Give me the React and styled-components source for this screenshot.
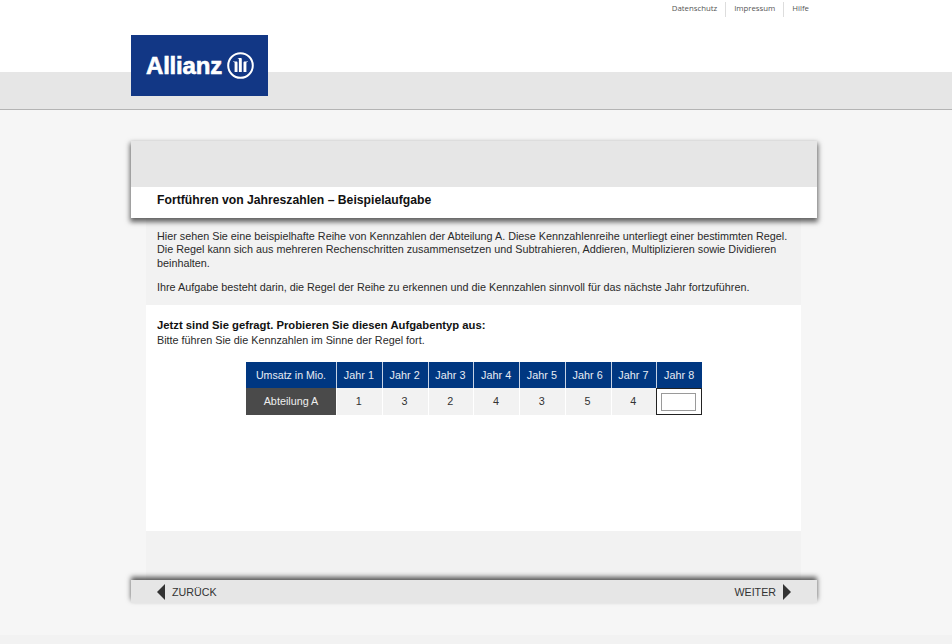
import React from "react";
import styled, { createGlobalStyle } from "styled-components";

const GlobalStyle = createGlobalStyle`
  html, body {
    margin: 0;
    padding: 0;
    background: #f6f6f6;
    font-family: "Liberation Sans", Arial, sans-serif;
    color: #1c1c1c;
  }
  * { box-sizing: border-box; }
`;

const Page = styled.div`
  width: 952px;
  height: 644px;
  overflow: hidden;
  position: relative;
  display: flex;
  flex-direction: column;
`;

const TopArea = styled.div`
  height: 72px;
  background: #fff;
  display: flex;
  justify-content: flex-end;
  padding: 2px 135px 0 0;
`;

const MetaLink = styled.a`
  height: 15px;
  line-height: 13px;
  padding: 0 8px;
  font-family: "Open Sans", sans-serif;
  font-size: 7.8px;
  color: #555;
  border-left: ${(p) => (p.$first ? "none" : "1px solid #ddd")};
`;

const GreyBand = styled.div`
  height: 38px;
  background: #e6e6e6;
  border-bottom: 1px solid #b4b4b4;
`;

const Logo = styled.div`
  position: absolute;
  left: 131px;
  top: 35px;
  width: 137px;
  height: 61px;
  background: #123785;
  color: #fff;
  display: flex;
  align-items: center;
  gap: 5px;
  padding-left: 15px;
  font-size: 24px;
  font-weight: 700;
  letter-spacing: -0.2px;
  -webkit-text-stroke: 0.6px #fff;
`;

const Main = styled.main`
  width: 686px;
  margin: 31px 0 0 131px;
  display: flex;
  flex-direction: column;
`;

const TitleCard = styled.header`
  height: 77px;
  position: relative;
  z-index: 1;
  display: flex;
  flex-direction: column;
  box-shadow: 0 3px 5px 1px rgba(0, 0, 0, 0.6);
`;

const TitleGrey = styled.div`
  height: 46px;
  background: #e6e6e6;
`;

const TitleWhite = styled.div`
  flex: 1;
  background: #fff;
  padding: 6px 0 0 26px;
`;

const Title = styled.h1`
  margin: 0;
  font-size: 12.2px;
  line-height: 15px;
  font-weight: 700;
  color: #111;
`;

const Column = styled.div`
  width: 655px;
  margin-left: 15px;
  display: flex;
  flex-direction: column;
`;

const Intro = styled.section`
  height: 87px;
  background: #f2f2f2;
  padding: 12px 11px 0;
  font-size: 10.8px;
  line-height: 13.3px;
  color: #2a2a2a;
`;

const Para = styled.p`
  margin: 0 0 11px;
`;

const Task = styled.section`
  height: 226px;
  background: #fff;
  padding: 13px 11px 0;
  font-size: 10.8px;
  line-height: 15px;
  color: #2a2a2a;
`;

const TaskHead = styled.div`
  font-size: 11.25px;
  font-weight: 700;
  color: #111;
`;

const FigureTable = styled.div`
  width: 456px;
  margin: 14px 0 0 89px;
  display: grid;
  grid-template-columns: 90px repeat(8, 45.75px);
  grid-template-rows: 26px 27px;
`;

const HeadCell = styled.div`
  background: #003781;
  color: #e8edf5;
  font-size: ${(p) => (p.$first ? "10.6px" : "10.8px")};
  display: flex;
  align-items: center;
  justify-content: center;
  padding-right: ${(p) => (p.$first ? "0" : "1px")};
  border-left: ${(p) => (p.$first ? "none" : "1px solid #c6d2e4")};
`;

const LabelCell = styled.div`
  background: #4a4a4a;
  color: #eee;
  font-size: 10.8px;
  display: flex;
  align-items: center;
  justify-content: center;
`;

const ValueCell = styled.div`
  background: #f2f2f2;
  color: #333;
  font-size: 10.8px;
  display: flex;
  align-items: center;
  justify-content: center;
  padding-right: 1px;
  border-left: 1px solid #fff;
`;

const InputCell = styled.div`
  background: #fff;
  border: 1px solid #222;
  padding-right: 2px;
  display: flex;
  align-items: center;
  justify-content: center;
`;

const AnswerInput = styled.input`
  width: 35px;
  height: 18px;
  padding: 0;
  border: 1px solid #9a9a9a;
  background: #fff;
`;

const Spacer = styled.div`
  height: 49px;
  background: #f2f2f2;
`;

const NavBar = styled.nav`
  height: 23px;
  position: relative;
  z-index: 1;
  background: #e6e6e6;
  display: flex;
  align-items: center;
  justify-content: space-between;
  padding: 0 26px;
  box-shadow: 0 -3px 5px 0 rgba(0, 0, 0, 0.65);
  font-size: 10.7px;
  color: #333;
`;

const NavButton = styled.div`
  display: flex;
  align-items: center;
  gap: 7px;
`;

const Arrow = styled.svg`
  width: 8px;
  height: 16px;
  fill: #333;
  display: block;
`;

const Footer = styled.div`
  position: absolute;
  left: 0;
  right: 0;
  bottom: 0;
  height: 9px;
  background: #f2f2f2;
`;

const values = [1, 3, 2, 4, 3, 5, 4];
const years = [1, 2, 3, 4, 5, 6, 7, 8];

function AllianzMark() {
  return (
    <svg width="27" height="27" viewBox="0 0 27 27" fill="none">
      <circle cx="13.5" cy="13.5" r="12.3" stroke="#fff" strokeWidth="2" />
      <path d="M6 9.5h3.2c1 0 1.3.5 1.3 1.4V20H7.6v-9c0-.6-.3-.9-1.6-.9z" fill="#fff" />
      <path d="M10.8 6h2.7c1 0 1.3.5 1.3 1.4V20h-2.9V7.4c0-.7-.2-1-1.1-1z" fill="#fff" />
      <path d="M21 9.5h-3.2c-1 0-1.3.5-1.3 1.4V20h2.9v-9c0-.6.3-.9 1.6-.9z" fill="#fff" />
    </svg>
  );
}

export default function App() {
  return (
    <Page>
      <GlobalStyle />
      <TopArea>
        <MetaLink $first>Datenschutz</MetaLink>
        <MetaLink>Impressum</MetaLink>
        <MetaLink>Hilfe</MetaLink>
      </TopArea>
      <GreyBand />
      <Logo>
        Allianz
        <AllianzMark />
      </Logo>
      <Main>
        <TitleCard>
          <TitleGrey />
          <TitleWhite>
            <Title>Fortführen von Jahreszahlen – Beispielaufgabe</Title>
          </TitleWhite>
        </TitleCard>
        <Column>
          <Intro>
            <Para>
              Hier sehen Sie eine beispielhafte Reihe von Kennzahlen der Abteilung A. Diese Kennzahlenreihe unterliegt einer bestimmten Regel.
              <br />
              Die Regel kann sich aus mehreren Rechenschritten zusammensetzen und Subtrahieren, Addieren, Multiplizieren sowie Dividieren
              <br />
              beinhalten.
            </Para>
            <Para>
              Ihre Aufgabe besteht darin, die Regel der Reihe zu erkennen und die Kennzahlen sinnvoll für das nächste Jahr fortzuführen.
            </Para>
          </Intro>
          <Task>
            <TaskHead>Jetzt sind Sie gefragt. Probieren Sie diesen Aufgabentyp aus:</TaskHead>
            <div>Bitte führen Sie die Kennzahlen im Sinne der Regel fort.</div>
            <FigureTable>
              <HeadCell $first>Umsatz in Mio.</HeadCell>
              {years.map((y) => (
                <HeadCell key={y}>Jahr {y}</HeadCell>
              ))}
              <LabelCell>Abteilung A</LabelCell>
              {values.map((v, i) => (
                <ValueCell key={i}>{v}</ValueCell>
              ))}
              <InputCell>
                <AnswerInput />
              </InputCell>
            </FigureTable>
          </Task>
          <Spacer />
        </Column>
        <NavBar>
          <NavButton>
            <Arrow viewBox="0 0 8 16">
              <path d="M8 0V16L0 8Z" />
            </Arrow>
            ZURÜCK
          </NavButton>
          <NavButton>
            WEITER
            <Arrow viewBox="0 0 8 16">
              <path d="M0 0V16L8 8Z" />
            </Arrow>
          </NavButton>
        </NavBar>
      </Main>
      <Footer />
    </Page>
  );
}
